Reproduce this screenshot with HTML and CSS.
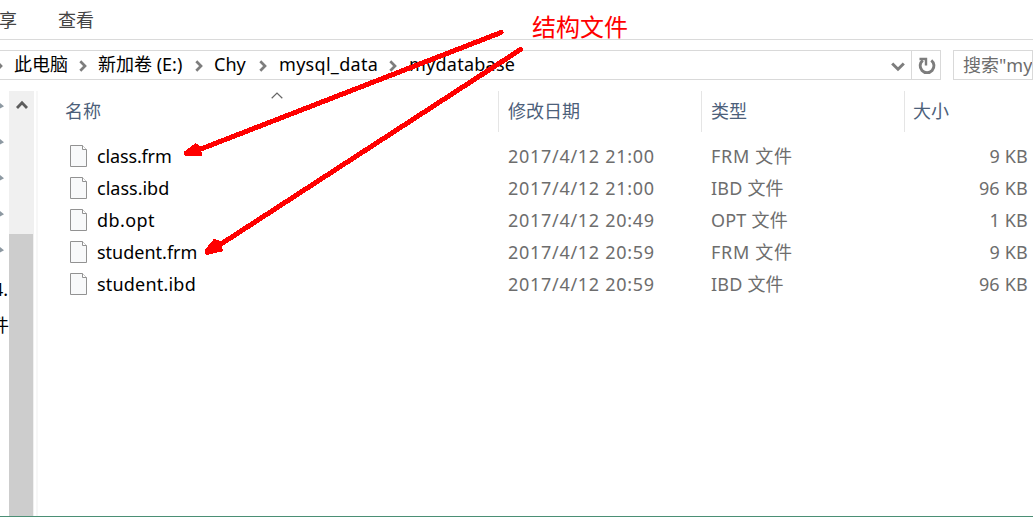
FILE: index.html
```html
<!DOCTYPE html>
<html lang="zh-CN">
<head>
<meta charset="utf-8">
<title>mydatabase</title>
<link rel="stylesheet" href="styles.css">
</head>
<body>
<svg class="defs" width="0" height="0">
  <symbol id="chev" viewBox="0 0 8 12"><path d="M1.3 1.2 6 6 1.3 10.8" fill="none" stroke="#7d7d7d" stroke-width="2.7"/></symbol>
  <symbol id="file" viewBox="0 0 17 22"><path d="M.5.5H12.5L16.5 4.5V21.5H.5Z" fill="#f8f9fa" stroke="#929292"/><path d="M12.5.5V4.5H16.5" fill="#fff" stroke="#929292"/></symbol>
  <symbol id="pin" viewBox="0 0 4 6"><path d="M0 0 4 3.2 0 5.5Z" fill="#8d99a2"/></symbol>
</svg>
<div class="window">
  <nav class="ribbon"><span class="tab">享</span><span class="tab">查看</span></nav>
  <div class="toolbar">
    <div class="address">
      <div class="crumbs">
        <svg class="chev first"><use href="#chev"/></svg><span class="crumb pc">此电脑</span>
        <svg class="chev"><use href="#chev"/></svg><span class="crumb drive">新加卷 (E:)</span>
        <svg class="chev"><use href="#chev"/></svg><span class="crumb chy">Chy</span>
        <svg class="chev"><use href="#chev"/></svg><span class="crumb data">mysql_data</span>
        <svg class="chev"><use href="#chev"/></svg><span class="crumb base">mydatabase</span>
      </div>
      <svg class="drop" viewBox="0 0 14 10"><path d="M1.2 1.5 7 7.2 12.8 1.5" fill="none" stroke="#7d7d7d" stroke-width="3"/></svg>
      <div class="refresh"><svg width="18" height="18" viewBox="0 0 18 18"><path d="M13.300 3.300A6.900 6.900 0 1 1 4.800 3.300" fill="none" stroke="#7d7d7d" stroke-width="2.900"/><path d="M1.500 2H8V8.500" fill="none" stroke="#7d7d7d" stroke-width="2.400"/></svg></div>
    </div>
    <div class="search">搜索"mydatabase"</div>
  </div>
  <main class="body">
    <aside class="tree">
      <svg class="pin"><use href="#pin"/></svg><svg class="pin"><use href="#pin"/></svg><svg class="pin"><use href="#pin"/></svg><svg class="pin"><use href="#pin"/></svg><svg class="pin"><use href="#pin"/></svg>
      <span class="node">4.</span><span class="node last">件</span>
    </aside>
    <div class="scroll"><svg class="up" viewBox="0 0 12 10"><path d="M1 8 6 2.8 11 8" fill="none" stroke="#5c5c5c" stroke-width="2.8"/></svg><div class="thumb"></div></div>
    <section class="list">
      <div class="row head">
        <div class="cell name">名称<svg class="sort" viewBox="0 0 12 7"><path d="M.7 6.2 6 1 11.3 6.2" fill="none" stroke="#666" stroke-width="1.2"/></svg></div><div class="cell">修改日期</div><div class="cell">类型</div><div class="cell">大小</div>
      </div>
      <div class="row"><div class="name tight"><svg class="file"><use href="#file"/></svg>class.frm</div><div class="date">2017/4/12 21:00</div><div class="type">FRM 文件</div><div class="size">9 KB</div></div>
      <div class="row"><div class="name"><svg class="file"><use href="#file"/></svg>class.ibd</div><div class="date">2017/4/12 21:00</div><div class="type snug">IBD 文件</div><div class="size">96 KB</div></div>
      <div class="row"><div class="name wide"><svg class="file"><use href="#file"/></svg>db.opt</div><div class="date">2017/4/12 20:49</div><div class="type snug">OPT 文件</div><div class="size">1 KB</div></div>
      <div class="row"><div class="name"><svg class="file"><use href="#file"/></svg>student.frm</div><div class="date">2017/4/12 20:59</div><div class="type">FRM 文件</div><div class="size">9 KB</div></div>
      <div class="row"><div class="name loose"><svg class="file"><use href="#file"/></svg>student.ibd</div><div class="date">2017/4/12 20:59</div><div class="type snug">IBD 文件</div><div class="size">96 KB</div></div>
    </section>
  </main>
  <svg class="arrows" viewBox="0 0 1033 525" shape-rendering="crispEdges">
    <g stroke="#f00" stroke-width="5" stroke-linecap="round"><path d="M501 32.500 197 150.500"/><path d="M520.500 49.500 218 246"/></g>
    <g fill="#f00" stroke="#f00" stroke-width="3" stroke-linejoin="round"><path d="M185 153 195.500 145 199 147 200.500 154.500 186 155Z"/><path d="M206 251 214.500 240.500 218 241.500 221.500 250 207 253.500Z"/></g>
  </svg>
  <div class="note">结构文件</div>
</div>
</body>
</html>
```
FILE: styles.css
```css
body { margin: 0; background: #fff; }
.defs { position: absolute; }
.window {
  position: relative; width: 1033px; height: 525px; overflow: hidden;
  display: flex; flex-direction: column;
  font: 18px/32px "Noto Sans", "Noto Sans CJK SC", sans-serif;
  white-space: nowrap; color: #000;
}
.ribbon { box-sizing: border-box; height: 40px; border-bottom: 1px solid #dadada; display: flex; gap: 41px; color: #444; line-height: 40px; }
.ribbon .tab:first-child { margin-left: -1px; }
.toolbar { display: flex; gap: 12px; height: 30px; margin-top: 10px; }
.address { box-sizing: border-box; width: 941px; flex: none; border: 1px solid #d9d9d9; border-left: 0; display: flex; align-items: center; }
.crumbs { flex: 1; display: flex; align-items: center; line-height: 26px; }
.chev { width: 8px; height: 12px; flex: none; margin-top: 2px; }
.chev.first { margin-left: -5px; }
.crumb { flex: none; box-sizing: border-box; padding-left: 11px; margin-top: -2px; }
.pc { width: 76px; }
.drive { width: 108px; }
.chy { width: 56px; }
.data { width: 122px; padding-left: 12px; letter-spacing: .3px; }
.base { padding-left: 12px; letter-spacing: .25px; }
.drop { width: 14px; height: 10px; margin: 3px 6px 0 0; }
.refresh { width: 28px; height: 28px; border-left: 1px solid #d9d9d9; display: flex; align-items: center; justify-content: center; }
.refresh svg { margin: 2px 0 0 2px; }
.search { box-sizing: border-box; width: 100px; height: 30px; border: 1px solid #d9d9d9; padding-left: 9px; line-height: 28px; color: #6d6d6d; overflow: hidden; }
.body { display: flex; height: 425px; margin-top: 11px; border-bottom: 1px solid #4b8f75; }
.tree { width: 9px; overflow: hidden; display: flex; flex-direction: column; }
.pin { width: 4px; height: 6px; margin: 12px 0 18px; flex: none; }
.node { height: 36px; line-height: 36px; margin-left: -7px; }
.tree .node.last { margin-left: -9px; }
.scroll { width: 25px; background: #f0f0f0; display: flex; flex-direction: column; align-items: center; }
.up { width: 12px; height: 10px; margin: 9px 0 124px; }
.thumb { width: 24px; flex: 1; background: #cdcdcd; align-self: flex-start; }
.list { flex: 1; margin-left: 2px; border-left: 2px solid #f7f7f7; }
.row { display: grid; grid-template-columns: 461px 203px 203px 128px; height: 32px; color: #6d6d6d; }
.head { height: 40px; margin-bottom: 9px; color: #4c607a; line-height: 41px; }
.cell { box-sizing: border-box; border-right: 1px solid #e5e5e5; padding-left: 9px; }
.cell:last-child { border: 0; padding-left: 8px; }
.cell.name { padding-left: 27px; color: #4c607a; display: flex; }
.sort { width: 12px; height: 7px; margin: 1px 0 0 170px; }
.name { display: flex; color: #000; padding-left: 32px; }
.tight { letter-spacing: -.15px; }
.wide { letter-spacing: .4px; }
.loose { letter-spacing: .2px; }
.file { width: 17px; height: 22px; margin: 5px 10px 0 0; flex: none; }
.date { padding-left: 9px; letter-spacing: .7px; }
.type { padding-left: 9px; letter-spacing: .7px; }
.snug { letter-spacing: .2px; }
.size { text-align: right; padding-right: 5px; letter-spacing: .2px; }
.arrows { position: absolute; left: 0; top: 0; width: 1033px; height: 525px; }
.note { position: absolute; left: 532px; top: 8px; font-size: 24px; line-height: 38px; color: #f00; }
```
